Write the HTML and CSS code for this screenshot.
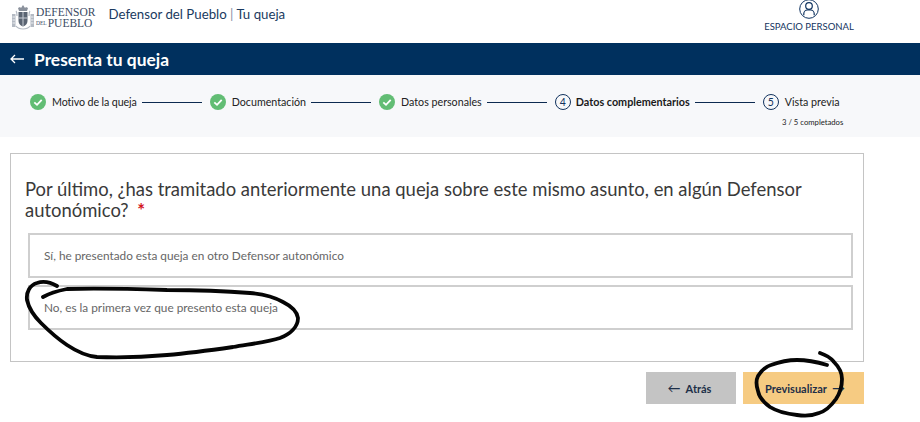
FILE: index.html
```html
<!DOCTYPE html>
<html lang="es">
<head>
<meta charset="utf-8">
<title>Presenta tu queja</title>
<link rel="stylesheet" href="styles.css">
</head>
<body>
<header class="top">
  <div class="logo">
    <svg class="crest" width="24" height="26" viewBox="0 0 24 26">
      <path d="M8 6h8l1-3-2-1-1 1-2-3-2 3-1-1-2 1z" fill="#8a919c"/>
      <path d="M7.500 7h9v9c0 3-2 4.500-4.500 5.500C9.500 20.500 7.500 19 7.500 16z" fill="#5a6472"/>
      <path d="M12 7v14M7.500 13h9" stroke="#c9ced6" stroke-width="1"/>
      <path d="M1 9h3.500v13H1zM19.500 9H23v13h-3.500z" fill="#b4bac3"/>
      <path d="M1.500 12h2.500M1.500 15h2.500M1.500 18h2.500M20 12h2.500M20 15h2.500M20 18h2.500" stroke="#eceef1" stroke-width="1"/>
      <path d="M5 6c1 1 1 3 1 5M19 6c-1 1-1 3-1 5M5 21c3 4 11 4 14 0" stroke="#b4bac3" stroke-width="1.200" fill="none"/>
    </svg>
    <div class="logo-words">
      <div class="logo-l1">DEFENSOR</div>
      <div class="logo-l2"><span class="logo-del">DEL</span>PUEBLO</div>
    </div>
  </div>
  <div class="site-title">Defensor del Pueblo <span class="pipe">|</span> Tu queja</div>
  <div class="personal">
    <svg width="20" height="20" viewBox="0 0 20 20" fill="none" stroke="#0f3360" stroke-width="1">
      <circle cx="10" cy="10" r="9.300"/>
      <circle cx="10" cy="7" r="3.300" stroke-width="1.200"/>
      <path d="M4.800 16.200v-1.400c0-2.200 1.800-3.800 3.600-3.800h3.200c1.800 0 3.600 1.600 3.600 3.800v1.400" stroke-width="1.200"/>
    </svg>
    <div class="personal-label">ESPACIO PERSONAL</div>
  </div>
</header>

<div class="bar">
  <svg width="14" height="10" viewBox="0 0 14 10" fill="none" stroke="#fff" stroke-width="1.300"><path d="M14 5H1M5 1 1 5l4 4"/></svg>
  <h1>Presenta tu queja</h1>
</div>

<nav class="steps">
  <div class="steps-row">
    <svg class="check" width="16" height="16" viewBox="0 0 16 16"><circle cx="8" cy="8" r="8" fill="#62bd74"/><path d="M4.300 8.300 7 10.800l4.700-5" fill="none" stroke="#fff" stroke-width="1.800"/></svg>
    <span class="step-label tight">Motivo de la queja</span><i class="line"></i>
    <svg class="check" width="16" height="16" viewBox="0 0 16 16"><circle cx="8" cy="8" r="8" fill="#62bd74"/><path d="M4.300 8.300 7 10.800l4.700-5" fill="none" stroke="#fff" stroke-width="1.800"/></svg>
    <span class="step-label">Documentación</span><i class="line"></i>
    <svg class="check" width="16" height="16" viewBox="0 0 16 16"><circle cx="8" cy="8" r="8" fill="#62bd74"/><path d="M4.300 8.300 7 10.800l4.700-5" fill="none" stroke="#fff" stroke-width="1.800"/></svg>
    <span class="step-label">Datos personales</span><i class="line"></i>
    <span class="num">4</span>
    <span class="step-label current">Datos complementarios</span><i class="line"></i>
    <span class="num">5</span>
    <span class="step-label">Vista previa</span>
  </div>
  <div class="progress">3 / 5 completados</div>
</nav>

<main class="content">
  <section class="card">
    <h2>Por último, ¿has tramitado anteriormente una queja sobre este mismo asunto, en algún Defensor autonómico? <span class="req">*</span></h2>
    <div class="option">Sí, he presentado esta queja en otro Defensor autonómico</div>
    <div class="option">No, es la primera vez que presento esta queja</div>
  </section>
  <div class="actions">
    <button class="btn back"><span class="arrow arrow-l">←</span>Atrás</button>
    <button class="btn next">Previsualizar<span class="arrow arrow-r">→</span></button>
  </div>
</main>

<svg class="ink" width="920" height="422" viewBox="0 0 920 422" fill="none" stroke="#050505" stroke-width="3.800" stroke-linecap="round" stroke-linejoin="round">
  <path d="M57 286C50 282 43 281 37 283 30 285 26 292 27 300 29 309 34 316 41 323 49 331 58 339 67 345 76 351 85 356 97 357 120 358 145 357 167 355 190 353 212 350 233 347 250 344 268 342 280 338 290 334 298 327 298 318 297 311 291 306 283 302 274 297 262 294 250 293 225 291 195 290 167 290 135 289 100 288 67 289 57 291 50 293 43 297"/>
  <path d="M820 353C826 355 831 358 834 362 839 367 842 372 842 379 842 387 840 393 836 399 831 406 826 411 819 413 812 416 804 416 797 415 787 414 778 412 770 407 763 402 759 397 758 391 756 385 756 380 758 376 761 371 765 367 771 365 779 362 788 360 797 360 807 360 817 362 827 365"/>
</svg>
</body>
</html>
```
FILE: styles.css
```css
* { box-sizing: border-box; }
html, body { margin: 0; padding: 0; }
body {
  position: relative;
  width: 920px;
  height: 422px;
  overflow: hidden;
  background: #fff;
  font-family: Lato, "Liberation Sans", sans-serif;
  color: #222;
}
.top {
  height: 43px;
  display: flex;
  align-items: flex-start;
  padding-left: 11px;
}
.logo { display: flex; align-items: flex-start; padding-top: 5px; width: 97.500px; }
.crest { flex: none; margin-right: 1px; }
.logo-words {
  font-family: "Liberation Serif", serif;
  color: #3a4a63;
  line-height: 11px;
  padding-top: 2px;
}
.logo-l1 { font-size: 11.500px; }
.logo-l2 { font-size: 11.500px; white-space: nowrap; display: flex; align-items: center; }
.logo-del { font-size: 5.500px; margin-right: 1px; }
.site-title {
  font-size: 13.250px;
  line-height: 16px;
  margin-top: 6px;
  color: #1a3a60;
  white-space: nowrap;
}
.pipe { color: #7f8fa3; }
.personal {
  margin-left: auto;
  margin-right: 66px;
  width: 90px;
  display: flex;
  flex-direction: column;
  align-items: center;
  margin-top: -1px;
}
.personal-label {
  font-size: 9.500px;
  line-height: 12px;
  margin-top: 2px;
  color: #12335e;
  white-space: nowrap;
}
.bar {
  height: 32px;
  background: #00305e;
  display: flex;
  align-items: center;
  gap: 10px;
  padding-left: 10px;
}
.bar h1 {
  margin: 0;
  font-size: 17.400px;
  font-weight: 700;
  color: #fff;
}
.steps {
  height: 62px;
  background: #f7f8fa;
  padding: 19px 0 0 30px;
  position: relative;
}
.steps-row { display: flex; align-items: center; height: 16px; }
.check { flex: none; }
.step-label {
  font-size: 10.700px;
  line-height: 16px;
  margin-left: 6px;
  color: #222;
  white-space: nowrap;
}
.step-label.tight { letter-spacing: -0.11px; }
.step-label.current { font-size: 10.800px; font-weight: 700; margin-left: 5px; color: #1a1a1a; }
.line {
  display: block;
  flex: none;
  width: 60px;
  height: 1px;
  background: #0c2a50;
  margin: 0 8px 0 5px;
}
.num {
  flex: none;
  width: 16px;
  height: 16px;
  border: 1px solid #12335e;
  border-radius: 50%;
  font-size: 10.500px;
  line-height: 14px;
  text-align: center;
  color: #12335e;
}
.progress {
  font-size: 7.700px;
  line-height: 10px;
  margin: 7px 0 0 752px;
  color: #222;
  white-space: nowrap;
}
.content { padding: 16px 56px 0 10px; }
.card {
  height: 209px;
  border: 1px solid #c4c4c4;
  padding: 25px 10px 0 17px;
}
.card h2 {
  margin: 0 0 12px -3px;
  font-size: 18.450px;
  line-height: 21px;
  font-weight: 400;
  color: #3a3a3a;
  width: 820px;
}
.req { color: #d3141c; font-weight: 700; margin-left: 4px; }
.option {
  height: 45px;
  border: 2px solid #cfcfcf;
  padding: 0 14px 1px;
  display: flex;
  align-items: center;
  font-size: 11.800px;
  color: #666;
  margin-bottom: 7px;
}
.actions { display: flex; justify-content: flex-end; gap: 7px; margin-top: 10px; }
.btn {
  height: 32px;
  border: 0;
  font-family: Lato, "Liberation Sans", sans-serif;
  font-size: 11px;
  font-weight: 700;
  color: #1d2f48;
  padding: 0;
}
.arrow { font-size: 13px; font-weight: 400; }
.arrow-l { margin-right: 5px; }
.arrow-r { margin-left: 5px; }
.back { width: 90px; background: #c4c4c4; padding-right: 3px; }
.next { width: 121px; background: #f6cb82; padding-left: 3px; }
.ink { position: absolute; left: 0; top: 0; pointer-events: none; }
```
